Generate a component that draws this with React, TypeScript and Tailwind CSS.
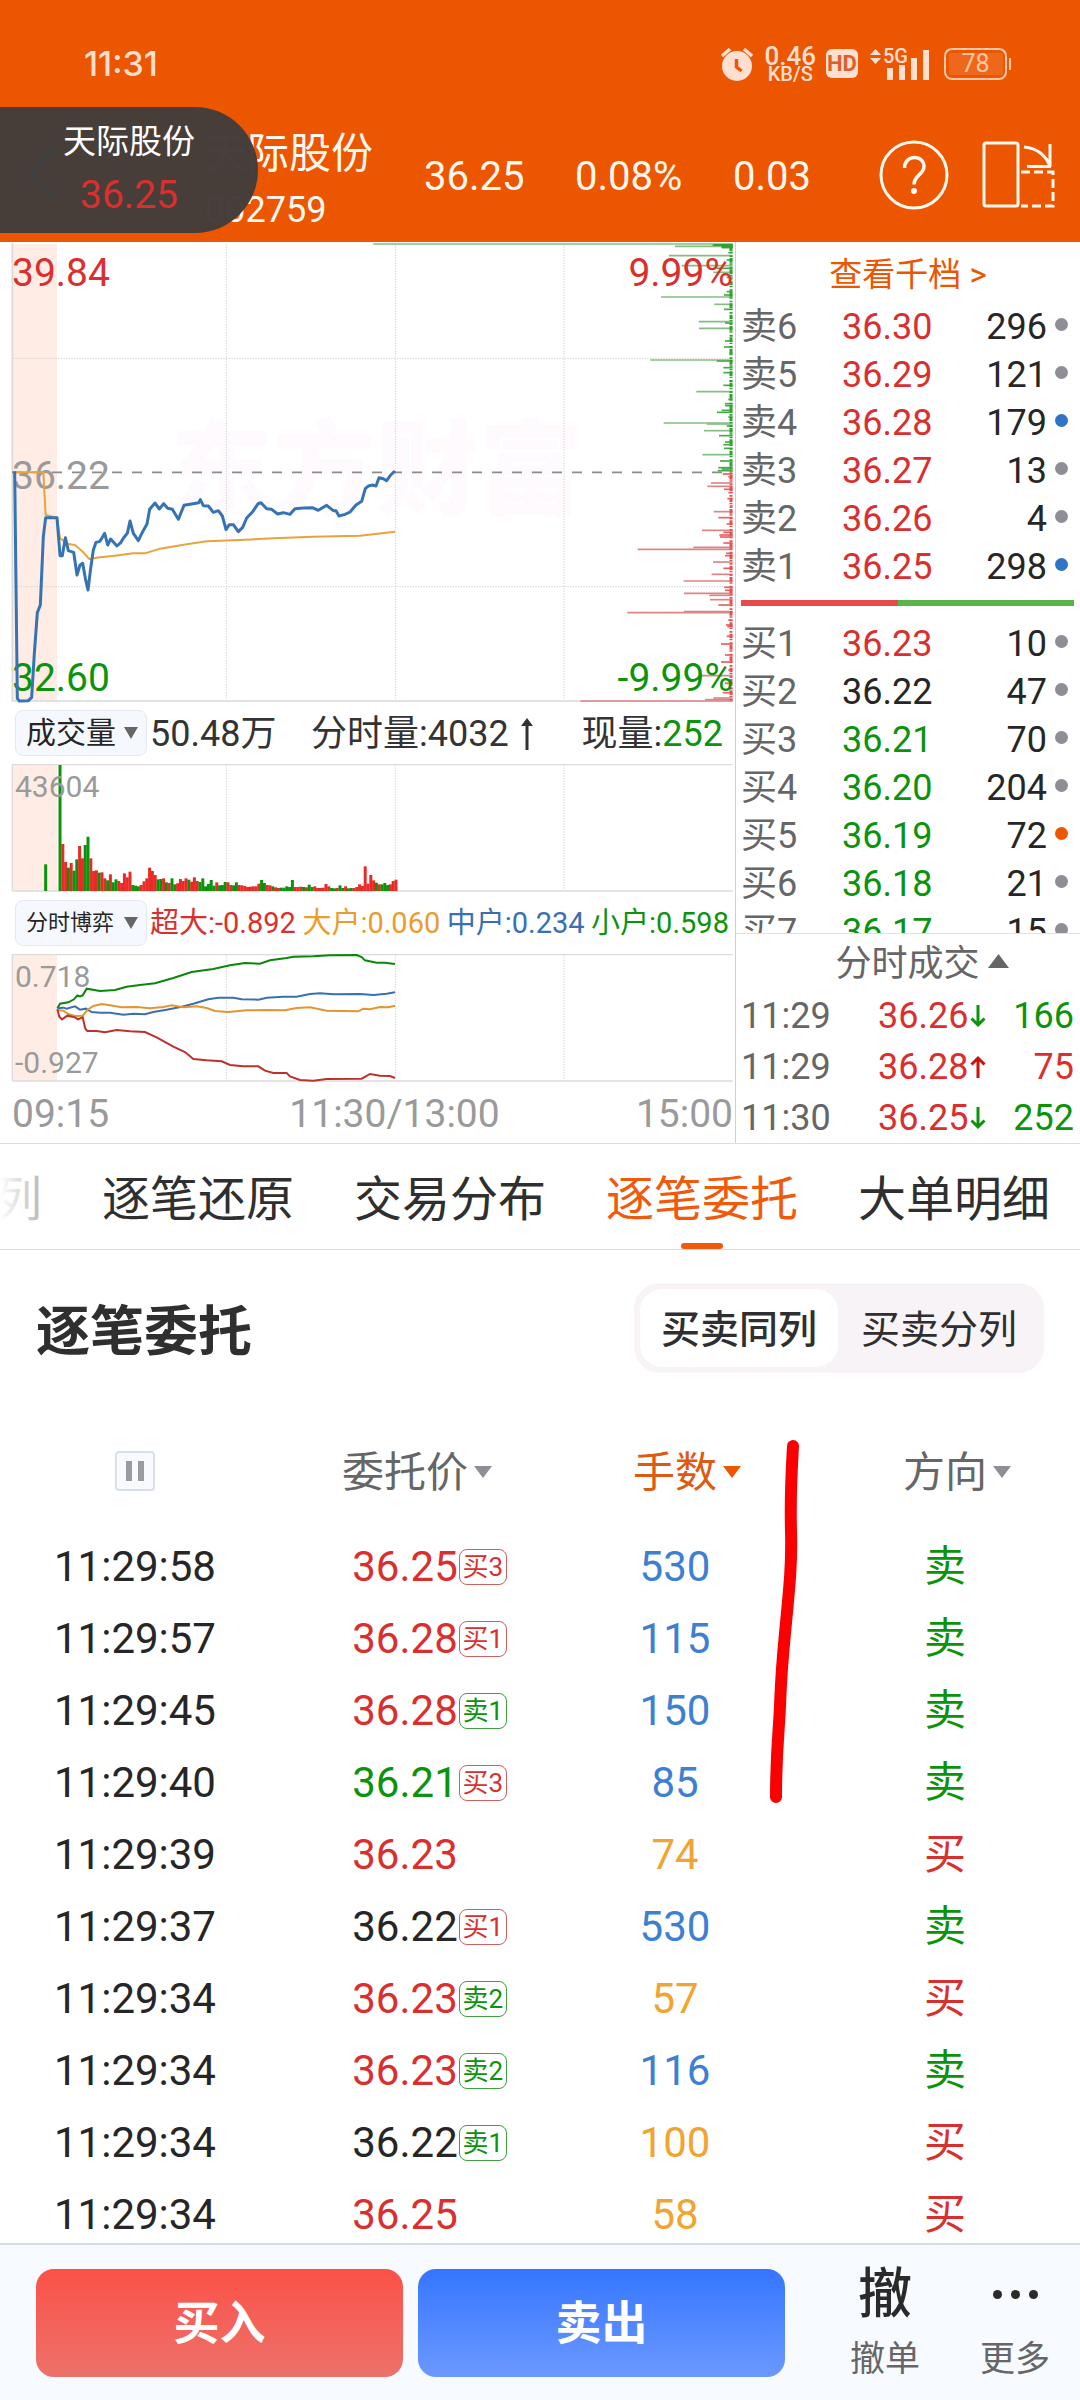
import { useState } from "react";
import clsx from "clsx";

type Tone = "up" | "down" | "flat";

const toneText: Record<Tone, string> = {
  up: "text-[#d9302f]",
  down: "text-[#0b930b]",
  flat: "text-[#262626]",
};

interface Level {
  label: string;
  price: string;
  qty: number;
  tone: Tone;
  dot: string;
}

const GREY_DOT = "bg-[#8e8e96]";
const BLUE_DOT = "bg-[#2f74c5]";
const ORANGE_DOT = "bg-[#ec5600]";

const asks: Level[] = [
  { label: "卖6", price: "36.30", qty: 296, tone: "up", dot: GREY_DOT },
  { label: "卖5", price: "36.29", qty: 121, tone: "up", dot: GREY_DOT },
  { label: "卖4", price: "36.28", qty: 179, tone: "up", dot: BLUE_DOT },
  { label: "卖3", price: "36.27", qty: 13, tone: "up", dot: GREY_DOT },
  { label: "卖2", price: "36.26", qty: 4, tone: "up", dot: GREY_DOT },
  { label: "卖1", price: "36.25", qty: 298, tone: "up", dot: BLUE_DOT },
];

const bids: Level[] = [
  { label: "买1", price: "36.23", qty: 10, tone: "up", dot: GREY_DOT },
  { label: "买2", price: "36.22", qty: 47, tone: "flat", dot: GREY_DOT },
  { label: "买3", price: "36.21", qty: 70, tone: "down", dot: GREY_DOT },
  { label: "买4", price: "36.20", qty: 204, tone: "down", dot: GREY_DOT },
  { label: "买5", price: "36.19", qty: 72, tone: "down", dot: ORANGE_DOT },
  { label: "买6", price: "36.18", qty: 21, tone: "down", dot: GREY_DOT },
  { label: "买7", price: "36.17", qty: 15, tone: "down", dot: GREY_DOT },
];

const ticks = [
  { time: "11:29", price: "36.26", up: false, qty: 166 },
  { time: "11:29", price: "36.28", up: true, qty: 75 },
  { time: "11:30", price: "36.25", up: false, qty: 252 },
];

interface Order {
  time: string;
  price: string;
  tone: Tone;
  badge?: string;
  lots: number;
  side: "买" | "卖";
}

const orders: Order[] = [
  { time: "11:29:58", price: "36.25", tone: "up", badge: "买3", lots: 530, side: "卖" },
  { time: "11:29:57", price: "36.28", tone: "up", badge: "买1", lots: 115, side: "卖" },
  { time: "11:29:45", price: "36.28", tone: "up", badge: "卖1", lots: 150, side: "卖" },
  { time: "11:29:40", price: "36.21", tone: "down", badge: "买3", lots: 85, side: "卖" },
  { time: "11:29:39", price: "36.23", tone: "up", lots: 74, side: "买" },
  { time: "11:29:37", price: "36.22", tone: "flat", badge: "买1", lots: 530, side: "卖" },
  { time: "11:29:34", price: "36.23", tone: "up", badge: "卖2", lots: 57, side: "买" },
  { time: "11:29:34", price: "36.23", tone: "up", badge: "卖2", lots: 116, side: "卖" },
  { time: "11:29:34", price: "36.22", tone: "flat", badge: "卖1", lots: 100, side: "买" },
  { time: "11:29:34", price: "36.25", tone: "up", lots: 58, side: "买" },
];

// Chart data is kept at three units per pixel.
const priceLine =
  "44,694 52,1375 58,1383 85,1382 95,1372 103,1240 112,1118 121,1095 130,890 137,833 171,833 180,947 187,947 196,893 205,932 221,937 231,1005 240,975 248,970 256,1015 264,1050 272,985 280,930 288,907 300,904 314,880 323,915 332,897 342,908 351,918 362,908 371,893 382,880 390,843 400,880 415,902 428,875 441,852 449,808 465,789 478,807 491,791 503,805 517,808 535,838 552,796 575,792 596,788 601,779 610,797 625,798 640,817 655,812 667,828 678,869 688,854 700,854 715,875 728,862 740,834 758,815 775,790 783,788 800,806 815,808 833,822 850,818 870,823 885,806 910,804 937,803 955,811 980,796 1000,812 1008,812 1017,828 1035,823 1050,816 1068,795 1085,784 1096,746 1105,738 1118,735 1128,738 1137,713 1150,716 1160,722 1172,705 1185,693";
const averageLine =
  "44,697 130,697 137,825 171,833 180,895 205,912 225,915 248,935 268,957 300,952 345,947 400,940 435,940 480,926 560,913 620,904 720,900 820,895 940,890 1080,887 1185,875";

// [y, left edge]
const askDepth = [
  [12, 1120], [16, 2135], [19, 2025], [23, 2165], [38, 2185], [47, 2007], [60, 2180], [77, 2045], [85, 2150], [97, 2140],
  [112, 2180], [130, 2188], [155, 2180], [165, 2172], [171, 1983], [193, 2143], [208, 2172], [232, 2190], [245, 2096],
  [249, 2175], [265, 2097], [288, 2190], [303, 2175], [321, 2172], [340, 2188], [360, 1951], [363, 2150], [383, 2170],
  [398, 2170], [424, 2188], [436, 2170], [455, 2089], [478, 2185], [491, 2175], [497, 2175], [511, 2165], [517, 2151],
  [531, 2185], [549, 1991], [552, 2120], [558, 2180], [572, 2112], [587, 2157], [606, 2175], [614, 2170], [625, 2172],
  [644, 2107], [663, 2160], [683, 2155], [687, 2165], [692, 2153],
];
const bidDepth = [
  [702, 2168], [710, 2185], [729, 2133], [739, 2122], [748, 2172], [758, 2185], [776, 2182], [798, 2190], [815, 2141],
  [833, 2155], [852, 2180], [871, 2106], [877, 2170], [885, 2158], [891, 2160], [909, 2170], [922, 2080], [928, 1913],
  [940, 2178], [947, 2175], [966, 2139], [985, 2170], [1003, 2135], [1023, 2051], [1042, 2172], [1051, 2175],
  [1060, 2052], [1066, 2128], [1079, 2130], [1095, 2155], [1115, 2052], [1118, 1882], [1140, 2185], [1155, 2178],
  [1160, 2182], [1189, 2180], [1212, 2163], [1245, 2175], [1266, 2163], [1290, 2185], [1307, 2102], [1330, 2175],
  [1345, 2188], [1358, 2168], [1374, 2140], [1379, 2115], [1383, 1741],
];

const volumes =
  "g378 r141 r87 g70 r84 g61 g95 r135 r98 g138 g163 r98 r60 r62 g55 r56 r38 g32 r50 g26 g35 r30 r24 r53 r41 r58 g18 g16 g14 r18 r29 r38 r70 r60 r48 g35 g36 r38 g26 r24 g38 g20 r23 r36 r30 r38 g34 r28 r41 r30 g27 g38 g14 g21 g33 g16 r26 g17 g18 g27 r26 r18 g17 g26 r18 r17 r15 r12 r13 r14 r14 r22 g33 g24 r18 r17 g14 r11 r9 g10 g10 g14 g12 g33 r12 r12 r13 g12 r11 g19 g12 r14 r9 r9 r10 r21 r14 g9 g8 r9 g17 g9 r14 g8 g9 r9 r12 r20 r15 r74 r22 r48 r32 g25 r20 g20 g24 g18 r20 r30 r34"
    .split(" ")
    .map((v) => ({ up: v[0] === "r", h: Number(v.slice(1)) }));

const flowLines = [
  {
    color: "#0b860b",
    points:
      "172,925 180,911 205,907 222,898 232,886 240,889 248,886 260,866 300,873 345,870 380,860 420,855 465,850 520,834 575,816 640,807 690,796 735,789 780,791 810,781 860,774 880,770 940,769 990,766 1070,765 1085,771 1095,781 1130,788 1155,788 1185,792",
  },
  {
    color: "#3a70b0",
    points:
      "172,925 190,923 200,926 225,919 240,929 258,926 275,936 300,938 330,938 370,944 400,941 435,943 460,936 500,929 545,920 580,911 625,898 655,893 700,893 725,898 775,899 800,893 850,890 890,890 930,882 960,880 1000,883 1080,882 1120,885 1160,881 1185,877",
  },
  {
    color: "#e4952f",
    points:
      "172,930 190,932 205,942 225,948 248,947 262,930 280,918 305,912 330,916 365,922 410,921 450,925 490,921 515,916 550,922 590,919 620,924 645,933 685,936 740,931 800,930 855,931 890,924 930,922 980,932 1075,934 1090,926 1110,928 1140,921 1165,922 1185,917",
  },
  {
    color: "#c12f2d",
    points:
      "172,928 178,950 186,958 202,947 225,952 234,958 248,952 256,986 262,993 290,993 315,997 350,990 390,994 435,996 470,1012 520,1040 555,1056 580,1077 620,1081 665,1084 690,1095 730,1099 775,1099 795,1112 820,1119 860,1119 870,1129 900,1140 940,1142 980,1137 1085,1136 1110,1122 1140,1127 1170,1128 1185,1134",
  },
];

const tabs = ["逐笔还原", "交易分布", "逐笔委托", "大单明细"];

function StatusBar() {
  return (
    <div className="flex h-[107px] items-center justify-between pt-5 pr-[69px] pl-[84px] text-[#ffdfcf]">
      <span className="font-['Inter','Roboto',sans-serif] text-[34px] leading-none font-medium">11:31</span>
      <div className="flex items-center gap-2.5">
        <svg className="h-[34px] w-[34px]" viewBox="0 0 34 34" fill="none" aria-hidden="true">
          <circle cx="17" cy="19" r="15" fill="#ffdfcf" />
          <path d="M2 9 10 2M32 9 24 2" stroke="#ffdfcf" strokeWidth="3.5" />
          <path d="M16.5 12v8l5 4" stroke="#ec5600" strokeWidth="3.5" />
        </svg>
        <div className="flex flex-col items-center font-medium">
          <span className="text-[26px] leading-5">0.46</span>
          <span className="text-[20px] leading-4">KB/S</span>
        </div>
        <span className="flex h-[29px] w-8 items-center justify-center rounded-md bg-[#ffdfcf] text-[22px] leading-none font-bold text-[#d9622a]">
          HD
        </span>
        <div className="relative ml-0.5 h-8 w-[60px]">
          <svg className="h-8 w-[60px]" viewBox="0 0 60 32" fill="#ffdfcf" aria-hidden="true">
            <path d="M0 7 5.500 1 11 7zM0 10h11l-5.500 6zM17 20h6v12h-6zM29 17h6v15h-6zM41 10h6v22h-6zM53 2h6v30h-6z" />
          </svg>
          <span className="absolute top-0 left-[13px] text-[20px] leading-4 font-medium">5G</span>
        </div>
        <div className="ml-1 flex items-center">
          <span className="flex h-8 w-[63px] items-center justify-center rounded-lg border-2 border-[#ffc7a6]">
            <span className="flex h-[22px] w-[54px] items-center justify-center bg-white/10 text-[25px] leading-none text-[#ffc7a6]">
              78
            </span>
          </span>
          <span className="ml-0.5 h-3 w-0.5 bg-[#ffc7a6]" />
        </div>
      </div>
    </div>
  );
}

function Header() {
  return (
    <header className="relative bg-[#ec5600] text-[#fff8ee]">
      <StatusBar />
      <div className="flex h-[135px] items-center pr-6 pl-[205px]">
        <div className="flex w-[219px] flex-col pt-3.5">
          <h1 className="text-[42px] leading-[56px]">天际股份</h1>
          <span className="text-[36px] leading-[56px]">002759</span>
        </div>
        <div className="flex flex-1 items-center pt-1 text-[40px] leading-none">
          <span className="w-[151px]">36.25</span>
          <span className="w-[158px]">0.08%</span>
          <span>0.03</span>
        </div>
        <button type="button" aria-label="帮助" className="mr-[33px] h-[70px] w-[70px]">
          <svg viewBox="0 0 70 70" fill="none" stroke="currentColor" strokeWidth="3">
            <circle cx="35" cy="35" r="33" />
            <path d="M25.500 28c0-6 4-10.500 10-10.500s9.500 4 9.500 9c0 8-10 8.500-10 18" strokeWidth="3.500" />
            <circle cx="35" cy="51" r="1.500" fill="currentColor" />
          </svg>
        </button>
        <button type="button" aria-label="横屏" className="h-[70px] w-[74px]">
          <svg viewBox="0 0 74 70" fill="none" stroke="currentColor" strokeWidth="3">
            <rect x="2" y="3" width="34" height="63" rx="2" />
            <path d="M42 7c13 1 23 9 26 20M68 4v23M45 26.500h24" />
            <path d="M39 32h32v34H39" strokeDasharray="9 4" />
          </svg>
        </button>
      </div>

      {/* floating quote window */}
      <div className="absolute top-[107px] left-0 flex h-[126px] w-[258px] flex-col items-center rounded-r-full bg-[#433d3a]/98 pt-[17px]">
        <svg className="absolute top-[38px] left-7 h-14 w-8" viewBox="0 0 32 56" fill="none" aria-hidden="true">
          <path d="M28 2 3 28l25 26" stroke="#3f4241" strokeWidth="4" />
        </svg>
        <span className="relative text-[33px] leading-9 text-white">天际股份</span>
        <span className="relative pt-2.5 text-[39px] leading-[50px] text-[#d9302f]">36.25</span>
      </div>
    </header>
  );
}

function PriceChart() {
  return (
    <div className="relative h-[460px]">
      <span className="absolute top-[155px] left-[170px] text-[103px] leading-[150px] font-black text-[#fefafd]">
        东方财富
      </span>
      <svg className="relative h-full w-full" viewBox="0 6 2205 1380" preserveAspectRatio="none" fill="none">
        <path d="M38 12H171V1383H38z" fill="#ffece5" />
        <path
          d="M679 12V1383M1186 12V1383M1692 12V1383M38 355H2198M38 1040H2198"
          stroke="#d4d4d4"
          strokeWidth="3"
          strokeDasharray="4 4"
        />
        <path d="M37 8V1383H2198" stroke="#d9d9d9" strokeWidth="5" />
        <path d="M36 697H2170" stroke="#8c8c8c" strokeWidth="5" strokeDasharray="30 30" />
        {askDepth.map(([y, x]) => (
          <path key={y} d={`M${x} ${y}H2198`} stroke={x < 2150 ? "#85bd85" : "#46ab46"} strokeWidth="5" />
        ))}
        {bidDepth.map(([y, x]) => (
          <path key={y} d={`M${x} ${y}H2198`} stroke={x < 2150 ? "#dc8585" : "#e86060"} strokeWidth="5" />
        ))}
        <path d="M2193 12V695" stroke="#2fa32f" strokeWidth="9" strokeDasharray="5 3 14 2 4 6" />
        <path d="M2193 697V1383" stroke="#e85050" strokeWidth="9" strokeDasharray="5 3 14 2 4 6" />
        <path d="M2140 15H2198M2165 20H2198" stroke="#2fa32f" strokeWidth="6" />
      </svg>
      <div className="absolute inset-0 flex flex-col justify-between pt-2 pr-0.5 pb-px pl-3 text-[39px] leading-[46px]">
        <div className="flex justify-between">
          <span className="text-[#d9302f]">39.84</span>
          <span className="text-[#d9302f]">9.99%</span>
        </div>
        <span className="text-[#9a9a9a]">36.22</span>
        <div className="flex justify-between">
          <span className="text-[#0b930b]">32.60</span>
          <span className="text-[#0b930b]">-9.99%</span>
        </div>
      </div>
      <svg
        className="absolute inset-0 h-full w-full overflow-visible"
        viewBox="0 6 2205 1380"
        preserveAspectRatio="none"
        fill="none"
        strokeLinejoin="round"
      >
        <polyline points={averageLine} stroke="#eaa23c" strokeWidth="6" />
        <polyline points={priceLine} stroke="#3673b5" strokeWidth="9" />
      </svg>
    </div>
  );
}

function VolumeChart() {
  return (
    <div className="relative h-32">
      <svg className="h-full w-full" viewBox="0 192 2205 384" preserveAspectRatio="none" fill="none">
        <path d="M38 194H171V573H38z" fill="#ffece5" />
        <path d="M679 194V573M1186 194V573M1692 194V573" stroke="#d4d4d4" strokeWidth="3" strokeDasharray="4 4" />
        <path d="M37 573V193.500H2198M37 573H2198" stroke="#dcdcdc" strokeWidth="4" />
        <path d="M137 493V573" stroke="#0b930b" strokeWidth="9" />
        {volumes.map((v, i) => (
          <rect key={i} x={175.5 + i * 8.4} y={573 - v.h} width="9" height={v.h} fill={v.up ? "#e92a26" : "#0b930b"} />
        ))}
      </svg>
      <span className="absolute top-[7px] left-[15px] text-[30px] leading-8 text-[#9a9a9a]">43604</span>
    </div>
  );
}

function FlowChart() {
  return (
    <div className="relative h-32">
      <svg className="h-full w-full" viewBox="0 762 2205 384" preserveAspectRatio="none" fill="none">
        <path d="M38 764H171V1143H38z" fill="#ffece5" />
        <path d="M679 764V1143M1186 764V1143M1692 764V1143" stroke="#d4d4d4" strokeWidth="3" strokeDasharray="4 4" />
        <path d="M37 1143V763.500H2198M37 1143H2198" stroke="#dcdcdc" strokeWidth="4" />
        {flowLines.map((l) => (
          <polyline key={l.color} points={l.points} stroke={l.color} strokeWidth="6" />
        ))}
      </svg>
      <div className="absolute inset-0 flex flex-col justify-between px-[15px] pt-[7px] pb-[3px] text-[30px] leading-8 text-[#9a9a9a]">
        <span>0.718</span>
        <span>-0.927</span>
      </div>
    </div>
  );
}

function IndicatorButton({ label, small }: { label: string; small?: boolean }) {
  return (
    <button
      type="button"
      className={clsx(
        "flex h-[46px] w-[132px] shrink-0 items-center justify-between rounded-lg border border-[#e4e8f0] bg-[#f5f9ff] pr-2 pl-2.5 leading-none text-[#262626]",
        small ? "text-[22px]" : "text-[30px]",
      )}
    >
      {label}
      <Triangle className="h-3 w-3.5 text-[#666]" />
    </button>
  );
}

function Triangle({ className, up }: { className?: string; up?: boolean }) {
  return (
    <svg className={className} viewBox="0 0 10 10" preserveAspectRatio="none" fill="currentColor" aria-hidden="true">
      <path d={up ? "M0 10 5 0l5 10z" : "M0 0h10L5 10z"} />
    </svg>
  );
}

function Arrow({ up, className }: { up?: boolean; className?: string }) {
  return (
    <svg className={className} viewBox="0 0 16 24" fill="none" stroke="currentColor" strokeWidth="3" aria-hidden="true">
      <path d={up ? "M8 23V3M1.500 9.500 8 3l6.500 6.500" : "M8 1v20M1.500 14.500 8 21l6.500-6.500"} />
    </svg>
  );
}

function Charts() {
  return (
    <section>
      <PriceChart />
      <div className="flex h-[62px] items-center pl-[15px] text-[36px] leading-none text-[#333]">
        <IndicatorButton label="成交量" />
        <span className="ml-[3px] w-[161px] pt-0.5">50.48万</span>
        <span className="flex flex-1 items-center pt-0.5">
          分时量:4032
          <svg className="ml-3 h-8 w-3" viewBox="0 0 12 32" fill="currentColor" aria-hidden="true">
            <path d="M6 0 12 8H7.500v24h-3V8H0z" />
          </svg>
        </span>
        <span className="pt-0.5 pr-3">
          现量:<span className="text-[#0b930b]">252</span>
        </span>
      </div>
      <VolumeChart />
      <div className="flex h-[62px] items-center pl-[15px] text-[29px] leading-none whitespace-nowrap">
        <IndicatorButton label="分时博弈" small />
        <div className="ml-[3px] flex flex-1 justify-between pr-1.5">
          <span className="text-[#d9302f]">超大:-0.892</span>
          <span className="text-[#eb9c2c]">大户:0.060</span>
          <span className="text-[#3a70b0]">中户:0.234</span>
          <span className="text-[#0b930b]">小户:0.598</span>
        </div>
      </div>
      <FlowChart />
      <div className="flex h-[61px] items-center justify-between pt-1 pr-0.5 pl-3 text-[39px] leading-none text-[#9a9a9a]">
        <span>09:15</span>
        <span className="pl-11">11:30/13:00</span>
        <span>15:00</span>
      </div>
    </section>
  );
}

function LevelRow({ level }: { level: Level }) {
  return (
    <>
      <span className="w-[101px] text-[#666]">{level.label}</span>
      <span className={toneText[level.tone]}>{level.price}</span>
      <span className="flex-1 text-right text-[#262626]">{level.qty}</span>
      <span className={clsx("mb-1.5 ml-2 h-[13px] w-[13px] rounded-full", level.dot)} />
    </>
  );
}

function OrderBook() {
  return (
    <section className="flex flex-col border-l border-[#cfcfcf] text-[36px] leading-none">
      <a href="#depth" className="flex h-[61px] items-center justify-center pt-1 text-[33px] text-[#ec5600]">
        查看千档 &gt;
      </a>
      <ul className="pr-3 pl-[5px]">
        {asks.map((l) => (
          <li key={l.label} className="flex h-12 items-center">
            <LevelRow level={l} />
          </li>
        ))}
      </ul>
      <div className="mr-1.5 ml-[5px] mt-[9px] flex h-1.5">
        <span className="w-[47%] bg-[#e84b4b]" />
        <span className="flex-1 bg-[#5ab548]" />
      </div>
      <ul className="mt-[14px] h-[313px] overflow-hidden pr-3 pl-[5px]">
        {bids.map((l) => (
          <li key={l.label} className="flex h-12 items-center">
            <LevelRow level={l} />
          </li>
        ))}
      </ul>
      <button
        type="button"
        className="flex h-[57px] items-center justify-center gap-2 border-t border-[#e2e2e2] pt-1 pl-7 text-[#666]"
      >
        分时成交
        <Triangle up className="mb-1.5 h-3.5 w-[21px]" />
      </button>
      <ul className="pr-1.5 pl-[5px]">
        {ticks.map((t, i) => (
          <li key={i} className="flex h-[51px] items-center">
            <span className="w-[137px] text-[#666]">{t.time}</span>
            <span className="text-[#d9302f]">{t.price}</span>
            <Arrow up={t.up} className={clsx("ml-0.5 h-6 w-4", t.up ? "text-[#cc0f0f]" : "text-[#0b930b]")} />
            <span className={clsx("flex-1 text-right", t.up ? "text-[#d9302f]" : "text-[#0b930b]")}>{t.qty}</span>
          </li>
        ))}
      </ul>
    </section>
  );
}

function Tabs() {
  const [active, setActive] = useState("逐笔委托");
  return (
    <nav className="relative flex h-[107px] gap-[60px] overflow-hidden border-y border-[#dedede] text-[48px] leading-none whitespace-nowrap text-[#2f2f2f]">
      <button type="button" className="flex w-[42px] shrink-0 items-center justify-end pt-1.5 text-[#bbb]">
        列
      </button>
      {tabs.map((t) => (
        <button
          key={t}
          type="button"
          onClick={() => setActive(t)}
          className={clsx("relative flex items-center pt-1.5", active === t && "text-[#f05a0a]")}
        >
          {t}
          {active === t && (
            <span className="absolute bottom-0 left-1/2 h-1.5 w-[42px] -translate-x-1/2 rounded-full bg-[#f05a0a]" />
          )}
        </button>
      ))}
      <span className="pointer-events-none absolute inset-y-0 left-0 w-10 bg-linear-to-r from-white to-transparent" />
    </nav>
  );
}

function ViewToggle() {
  const [view, setView] = useState("买卖同列");
  return (
    <div className="flex h-[90px] gap-0.5 rounded-[26px] bg-[#f7f3f7] p-1.5 text-[39px] leading-none text-[#2f2f2f]">
      {["买卖同列", "买卖分列"].map((v) => (
        <button
          key={v}
          type="button"
          onClick={() => setView(v)}
          className={clsx("rounded-[22px] px-[21px] pt-1", view === v && "bg-white font-medium")}
        >
          {v}
        </button>
      ))}
    </div>
  );
}

function SortHead({ label, active }: { label: string; active?: boolean }) {
  return (
    <th className={clsx("pt-1 font-normal", active ? "text-[#dd5a12]" : "text-[#666]")}>
      <button type="button" className="relative leading-none">
        {label}
        <Triangle
          className={clsx("absolute top-3.5 left-full ml-1.5 h-3 w-[18px]", active ? "text-[#ec5600]" : "text-[#8e8e96]")}
        />
      </button>
    </th>
  );
}

function OrderTable() {
  return (
    <div className="relative min-h-0 flex-1 overflow-hidden">
      <table className="w-full table-fixed text-center text-[42px] leading-none text-[#262626]">
        <thead>
          <tr className="h-[120px]">
            <th>
              <button
                type="button"
                aria-label="暂停"
                className="mx-auto flex h-10 w-10 items-center justify-center gap-1.5 rounded-sm border-2 border-[#dbe0e8] bg-[#f7faff]"
              >
                <span className="h-5 w-1.5 bg-[#9a9aa2]" />
                <span className="h-5 w-1.5 bg-[#9a9aa2]" />
              </button>
            </th>
            <SortHead label="委托价" />
            <SortHead label="手数" active />
            <SortHead label="方向" />
          </tr>
        </thead>
        <tbody>
          {orders.map((o, i) => (
            <tr key={i} className="h-[72px]">
              <td>{o.time}</td>
              <td>
                <span className={clsx("relative inline-flex items-center", toneText[o.tone])}>
                  {o.price}
                  {o.badge && (
                    <span
                      className={clsx(
                        "absolute left-full ml-px flex h-9 w-12 items-center justify-center rounded-lg border text-[26px]",
                        o.badge.startsWith("买")
                          ? "border-[#cc6262] text-[#d9302f]"
                          : "border-[#3fa03f] text-[#0b930b]",
                      )}
                    >
                      {o.badge}
                    </span>
                  )}
                </span>
              </td>
              <td className={o.lots > 100 || o.lots === 85 ? "text-[#3d80d2]" : "text-[#f0a533]"}>{o.lots}</td>
              <td className={o.side === "买" ? "text-[#d9302f]" : "text-[#0b930b]"}>{o.side}</td>
            </tr>
          ))}
        </tbody>
      </table>
      {/* hand-drawn marker stroke */}
      <svg
        className="pointer-events-none absolute top-0 left-0 h-[420px] w-full"
        viewBox="0 0 1080 420"
        fill="none"
        aria-hidden="true"
      >
        <path
          d="M793 35C791 70 790 85 791 120S789 180 785 222 781 270 780 295 776 340 776 386"
          stroke="#fb0000"
          strokeWidth="12"
          strokeLinecap="round"
        />
      </svg>
    </div>
  );
}

function TradeBar() {
  return (
    <footer className="flex h-[157px] shrink-0 items-center gap-[15px] border-t-2 border-[#d3dbe3] bg-[#f7faff] pl-9">
      <button
        type="button"
        className="h-[108px] flex-1 rounded-[18px] bg-linear-to-b from-[#fb5047] to-[#ec716a] pt-0.5 text-[46px] font-bold text-white"
      >
        买入
      </button>
      <button
        type="button"
        className="h-[108px] flex-1 rounded-[18px] bg-linear-to-b from-[#3475ff] to-[#6b98ff] pt-0.5 text-[46px] font-bold text-white"
      >
        卖出
      </button>
      <div className="ml-5 flex text-[35px] leading-none text-[#666]">
        <button type="button" className="flex w-[130px] flex-col items-center pt-1">
          <span className="flex h-[70px] items-center text-[54px] font-medium text-[#2a2a2a]">撤</span>
          <span className="flex h-[60px] items-center">撤单</span>
        </button>
        <button type="button" className="flex w-[130px] flex-col items-center pt-1">
          <span className="flex h-[70px] items-center gap-[9px]">
            <span className="h-[9px] w-[9px] rounded-full bg-[#2a2a2a]" />
            <span className="h-[9px] w-[9px] rounded-full bg-[#2a2a2a]" />
            <span className="h-[9px] w-[9px] rounded-full bg-[#2a2a2a]" />
          </span>
          <span className="flex h-[60px] items-center">更多</span>
        </button>
      </div>
    </footer>
  );
}

export default function App() {
  return (
    <div className="flex h-screen flex-col overflow-hidden bg-white font-['Roboto','Noto_Sans_CJK_SC',sans-serif]">
      <Header />
      <main className="flex min-h-0 flex-1 flex-col">
        <div className="grid shrink-0 grid-cols-[735fr_345fr]">
          <Charts />
          <OrderBook />
        </div>
        <div className="shrink-0">
          <Tabs />
        </div>
        <div className="flex shrink-0 items-center justify-between pt-[33px] pr-9 pb-[38px] pl-9">
          <h2 className="pt-2.5 text-[54px] leading-none font-bold text-[#2f2f2f]">逐笔委托</h2>
          <ViewToggle />
        </div>
        <OrderTable />
      </main>
      <TradeBar />
    </div>
  );
}
